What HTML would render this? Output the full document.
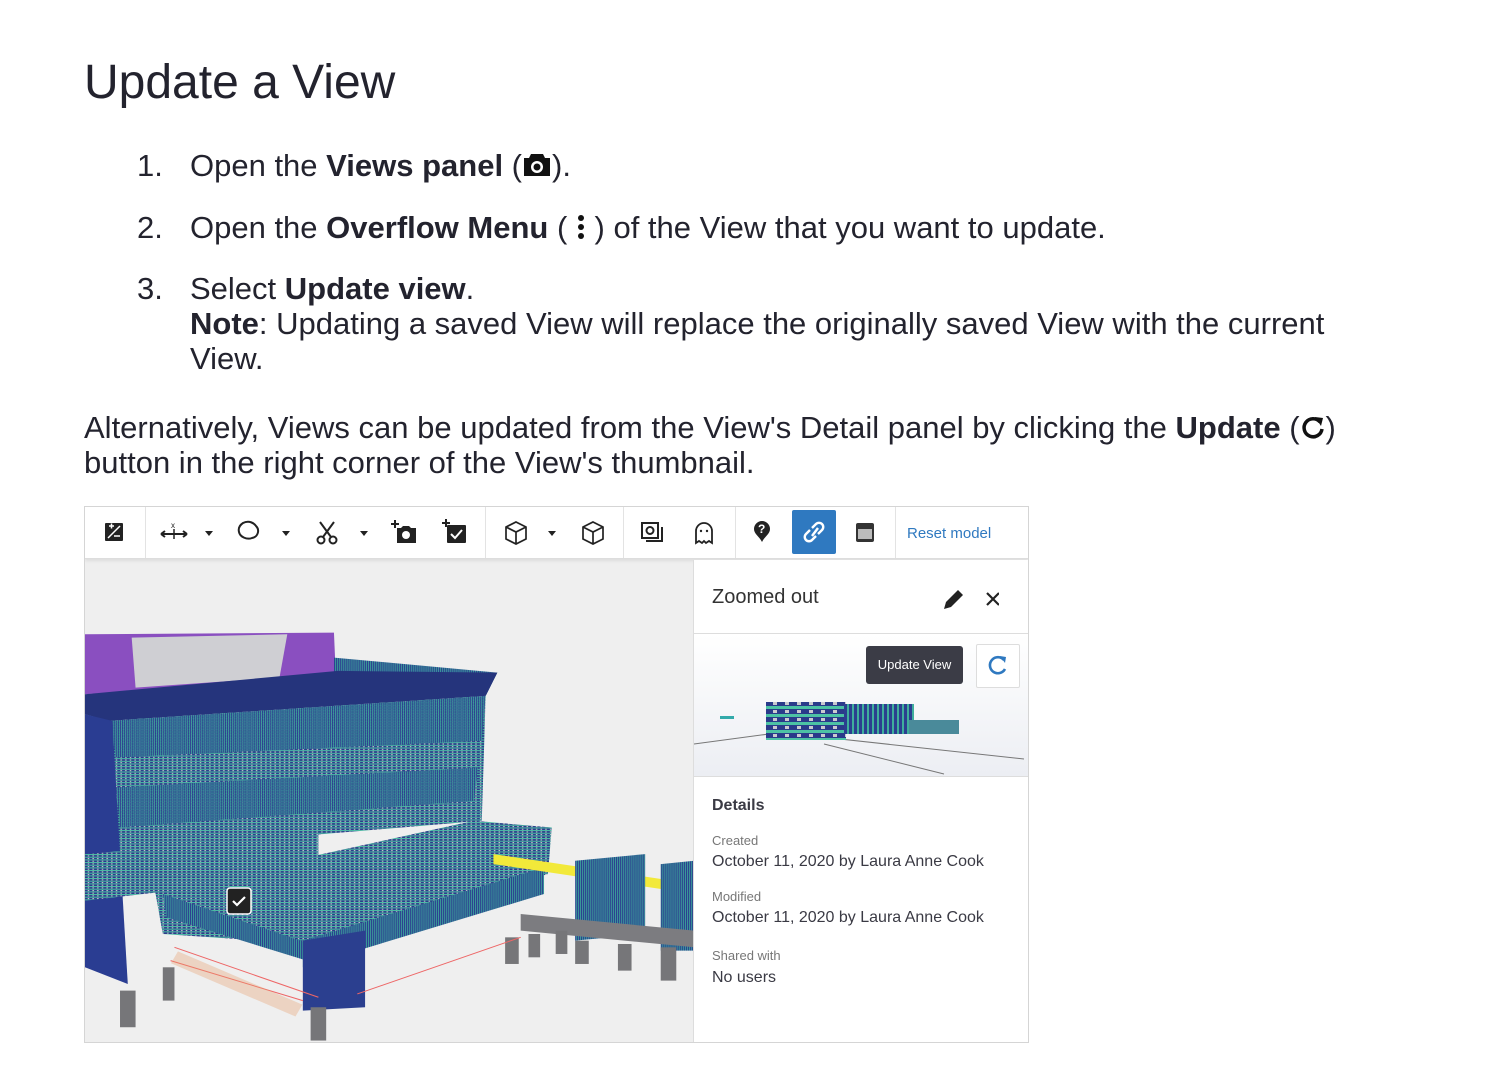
<!DOCTYPE html>
<html><head><meta charset="utf-8"><style>
body{margin:0;width:1509px;height:1080px;background:#fff;position:relative;overflow:hidden;font-family:"Liberation Sans",sans-serif;color:#23232e}
.a{position:absolute;white-space:nowrap}
.t{font-size:31px;line-height:35px}
b{font-weight:bold}
.ic{display:inline-block;vertical-align:middle}
.sep{position:absolute;top:0;width:1px;height:51px;background:#e3e3e3}
.lbl{font-size:13px;color:#777}
.val{font-size:16px;color:#3a3a44}
</style></head><body>
<div class="a" style="left:84px;top:54px;font-size:48px;line-height:58px;color:#23232e">Update a View</div>

<div class="a t" style="left:137px;top:148px">1.</div>
<div class="a t" style="left:190px;top:148px">Open the <b>Views panel</b> (<svg class="ic" width="30" height="26" viewBox="0 0 30 26" style="margin-top:-6px"><path d="M9 2h12l2 4h5v18H2V6h5z" fill="#111"/><circle cx="15" cy="15" r="6" fill="#fff"/><circle cx="15" cy="15" r="3.5" fill="#111"/></svg>).</div>

<div class="a t" style="left:137px;top:210px">2.</div>
<div class="a t" style="left:190px;top:210px">Open the <b>Overflow Menu</b> ( <svg class="ic" width="10" height="28" viewBox="0 0 10 28" style="margin-top:-6px"><circle cx="5" cy="5" r="3" fill="#111"/><circle cx="5" cy="14" r="3" fill="#111"/><circle cx="5" cy="23" r="3" fill="#111"/></svg> ) of the View that you want to update.</div>

<div class="a t" style="left:137px;top:271px">3.</div>
<div class="a t" style="left:190px;top:271px">Select <b>Update view</b>.</div>
<div class="a t" style="left:190px;top:306px"><b>Note</b>: Updating a saved View will replace the originally saved View with the current</div>
<div class="a t" style="left:190px;top:341px">View.</div>

<div class="a t" style="left:84px;top:410px">Alternatively, Views can be updated from the View's Detail panel by clicking the <b>Update</b> (<svg class="ic" width="26" height="26" viewBox="0 0 26 26" style="margin-top:-6px"><path d="M20 8A9 9 0 1 0 22 15" fill="none" stroke="#111" stroke-width="3.5"/><path d="M15 3l8 1-2 8z" fill="#111"/></svg>)</div>
<div class="a t" style="left:84px;top:445px">button in the right corner of the View's thumbnail.</div>

<div style="position:absolute;left:84px;top:506px;width:943px;height:535px;border:1px solid #d5d5d5;background:#efefef;overflow:hidden">
 <svg width="608" height="484" style="position:absolute;left:0;top:53px" viewBox="0 0 608 484">
  <defs>
   <pattern id="vs" width="5" height="10" patternUnits="userSpaceOnUse"><rect width="5" height="10" fill="#2b3f8f"/><rect x="3" width="2" height="10" fill="#3fae9c"/></pattern>
   <pattern id="fl" width="12" height="8" patternUnits="userSpaceOnUse"><rect width="12" height="8" fill="#2a3b8a"/><rect x="0" y="0" width="12" height="3" fill="#4cc2a4"/><rect x="7" y="4" width="4" height="3" fill="#c9c9cf"/></pattern>
  </defs>
  <g transform="translate(0,41) scale(0.389,0.333)">
   <polygon points="0,100 640,95 645,230 0,280" fill="#8a4fc0"/>
   <polygon points="120,110 520,100 500,230 130,260" fill="#cfcfd3"/>
   <polygon points="640,170 1060,215 1030,285 640,240" fill="url(#vs)"/>
   <polygon points="0,280 650,210 1060,215 1030,285 60,360 0,340" fill="#25347c"/>
   <polygon points="0,340 60,360 1030,285 1020,660 0,760" fill="url(#fl)"/>
   <polygon points="60,360 1030,285 1020,420 80,470" fill="url(#vs)" opacity=".9"/>
   <polygon points="80,560 1010,500 1000,600 90,680" fill="url(#vs)" opacity=".85"/>
   <polygon points="0,340 70,360 110,1150 0,1100" fill="#2a3d92"/>
   <polygon points="0,760 600,700 600,820 0,900" fill="url(#fl)"/>
   <polygon points="180,870 1000,660 1200,680 1190,820 580,1030 200,1000" fill="url(#fl)"/>
   <polygon points="200,880 580,1030 570,1080 210,950" fill="url(#vs)"/>
   <polygon points="560,1020 1180,800 1180,880 560,1100" fill="url(#vs)"/>
   <polygon points="560,1020 720,990 720,1220 560,1230" fill="#2b3f8f"/>
   <polygon points="1050,760 1568,850 1568,880 1050,790" fill="#f2e93a"/>
   <polygon points="1260,780 1440,760 1440,1000 1260,1020" fill="url(#vs)"/>
   <polygon points="1480,790 1568,780 1568,1050 1480,1050" fill="url(#vs)"/>
   <polygon points="1120,940 1568,990 1568,1040 1120,990" fill="#7c7c80"/>
   <g fill="#767679">
    <rect x="90" y="1170" width="40" height="110"/><rect x="200" y="1100" width="30" height="100"/><rect x="580" y="1220" width="40" height="100"/>
    <rect x="1080" y="1010" width="35" height="80"/><rect x="1140" y="1000" width="30" height="70"/><rect x="1210" y="990" width="30" height="70"/>
    <rect x="1260" y="1020" width="35" height="70"/><rect x="1370" y="1030" width="35" height="80"/><rect x="1480" y="1040" width="40" height="100"/>
   </g>
   <path d="M220 1080L560 1200M230 1040L600 1190M700 1180L1120 1010" stroke="#e66" stroke-width="3" fill="none"/>
   <path d="M230 1070l320 160" stroke="#e8a070" stroke-width="40" opacity=".35" fill="none"/>
  </g>
  <rect x="142" y="328" width="24" height="26" rx="3" fill="#222" stroke="#fff" stroke-width="1.5"/>
  <path d="M148 341l4 4 8-8" stroke="#fff" stroke-width="2.2" fill="none"/>
 </svg>

 <div style="position:absolute;left:0;top:0;width:943px;height:51px;background:#fff;border-bottom:1px solid #ddd;box-shadow:0 2px 3px rgba(0,0,0,.08)">
  <div class="sep" style="left:60px"></div><div class="sep" style="left:400px"></div><div class="sep" style="left:538px"></div><div class="sep" style="left:650px"></div><div class="sep" style="left:810px"></div>
  <svg width="943" height="51" style="position:absolute;left:0;top:0">
   <g fill="#222" stroke="#222">
    <rect x="20" y="16" width="18" height="18" rx="1" stroke="none"/><path d="M23 31l12-12" stroke="#fff" stroke-width="1.5"/><path d="M24 19h5M26.5 16.5v5M29 29h6" stroke="#fff" stroke-width="1.5"/>
    <path d="M76 27h26M76 27l4-3M76 27l4 3M102 27l-4-3M102 27l-4 3" fill="none" stroke-width="2"/><path d="M89 22v10" stroke-width="1.5"/><text x="86" y="21" font-size="8" stroke="none">x</text>
    <path d="M120 24h8l-4 5z" stroke="none"/>
    <path d="M158 16c6-3 11 0 13 3 4 4 2 11-4 12-5 2-12-1-13-6-1-4 1-7 4-9z" fill="none" stroke-width="2"/>
    <path d="M197 24h8l-4 5z" stroke="none"/>
    <circle cx="236" cy="33" r="3.5" fill="none" stroke-width="2"/><circle cx="248" cy="33" r="3.5" fill="none" stroke-width="2"/><path d="M238 30l11-15M246 30l-11-15" stroke-width="2"/>
    <path d="M275 24h8l-4 5z" stroke="none"/>
    <path d="M312 21h4l2-2h6l2 2h5v15h-19z" stroke="none"/><circle cx="321" cy="28" r="4" fill="#fff" stroke="none"/><path d="M310 13v8M306 17h8" stroke-width="2"/>
    <rect x="362" y="18" width="19" height="18" rx="1" stroke="none"/><path d="M366 27l4 4 7-8" stroke="#fff" stroke-width="2" fill="none"/><path d="M361 12v8M357 16h8" stroke-width="2"/>
    <path d="M431 15l10 5v12l-10 5-10-5V20zM421 20l10 5 10-5M431 25v12" fill="none" stroke-width="1.7"/>
    <path d="M463 24h8l-4 5z" stroke="none"/>
    <path d="M508 15l10 5v12l-10 5-10-5V20zM498 20l10 5 10-5M508 25v12" fill="none" stroke-width="1.7"/>
    <rect x="557" y="16" width="16" height="15" fill="none" stroke-width="2"/><path d="M561 34h16V20" fill="none" stroke-width="2"/><circle cx="565" cy="23.5" r="3.5" fill="none" stroke-width="2"/>
    <path d="M611 36V24a8 8 0 0 1 16 0v12l-3-2-3 2-2-2-2 2-3-2z" fill="none" stroke-width="1.8"/><circle cx="616" cy="24" r="1.2" stroke="none"/><circle cx="622" cy="24" r="1.2" stroke="none"/>
    <path d="M677 14a8 8 0 0 1 8 8c0 5-5 7-8 13-3-6-8-8-8-13a8 8 0 0 1 8-8z" stroke="none"/><text x="673" y="26" font-size="12" font-weight="bold" fill="#fff" stroke="none">?</text>
   </g>
   <rect x="707" y="3" width="44" height="44" rx="2" fill="#2f79c0"/>
   <g fill="none" stroke="#fff" stroke-width="2.4"><path d="M727 21l4-4a4 4 0 0 1 6 6l-4 4"/><path d="M731 29l-4 4a4 4 0 0 1-6-6l4-4"/><path d="M727 29l6-8"/></g>
   <rect x="771" y="16" width="18" height="19" rx="2" fill="#333"/><rect x="773" y="22" width="14" height="10" fill="#bbb"/>
   <text x="822" y="31" font-size="15" fill="#2f79c0" font-family="Liberation Sans">Reset model</text>
  </svg>
 </div>

 <div style="position:absolute;left:608px;top:53px;width:335px;height:482px;background:#fff;border-left:1px solid #ddd">
  <div class="a" style="left:18px;top:26px;font-size:20px;color:#333">Zoomed out</div>
  <svg width="60" height="30" style="position:absolute;left:245px;top:25px"><path d="M5 24l2-7 12-12 5 5-12 12z" fill="#222"/><path d="M51 6l12 12M63 6L51 18" transform="translate(-3,2)" stroke="#222" stroke-width="2.2"/></svg>
  <div style="position:absolute;left:0;top:73px;width:335px;height:142px;background:linear-gradient(#fff,#eceef3);border-top:1px solid #ddd;border-bottom:1px solid #ddd">
   <svg width="335" height="142" style="position:absolute;left:0;top:0"><path d="M0 110l75-10M100 100l230 25M130 110l120 30" stroke="#777" stroke-width="1" fill="none"/><rect x="72" y="68" width="80" height="38" fill="url(#fl)"/><rect x="150" y="70" width="70" height="30" fill="url(#vs)"/><rect x="215" y="86" width="50" height="14" fill="#4a8a9a"/><rect x="26" y="82" width="14" height="3" fill="#3aa"/></svg>
   <div style="position:absolute;left:172px;top:12px;width:97px;height:38px;background:#3b3c46;border-radius:3px;color:#fff;font-size:13px;line-height:38px;text-align:center">Update View</div>
   <div style="position:absolute;left:282px;top:10px;width:42px;height:42px;background:#fff;border:1px solid #ddd;border-radius:2px"><svg width="42" height="42"><path d="M27 15a8 8 0 1 0 1 9" fill="none" stroke="#2f79c0" stroke-width="2.6"/><path d="M23 11l6 1-1 6z" fill="#2f79c0"/></svg></div>
  </div>
  <div class="a" style="left:18px;top:237px;font-size:16px;font-weight:bold;color:#3a3a44">Details</div>
  <div class="a lbl" style="left:18px;top:273px">Created</div>
  <div class="a val" style="left:18px;top:293px">October 11, 2020 by Laura Anne Cook</div>
  <div class="a lbl" style="left:18px;top:329px">Modified</div>
  <div class="a val" style="left:18px;top:349px">October 11, 2020 by Laura Anne Cook</div>
  <div class="a lbl" style="left:18px;top:388px">Shared with</div>
  <div class="a val" style="left:18px;top:409px">No users</div>
 </div>
</div>
</body></html>
